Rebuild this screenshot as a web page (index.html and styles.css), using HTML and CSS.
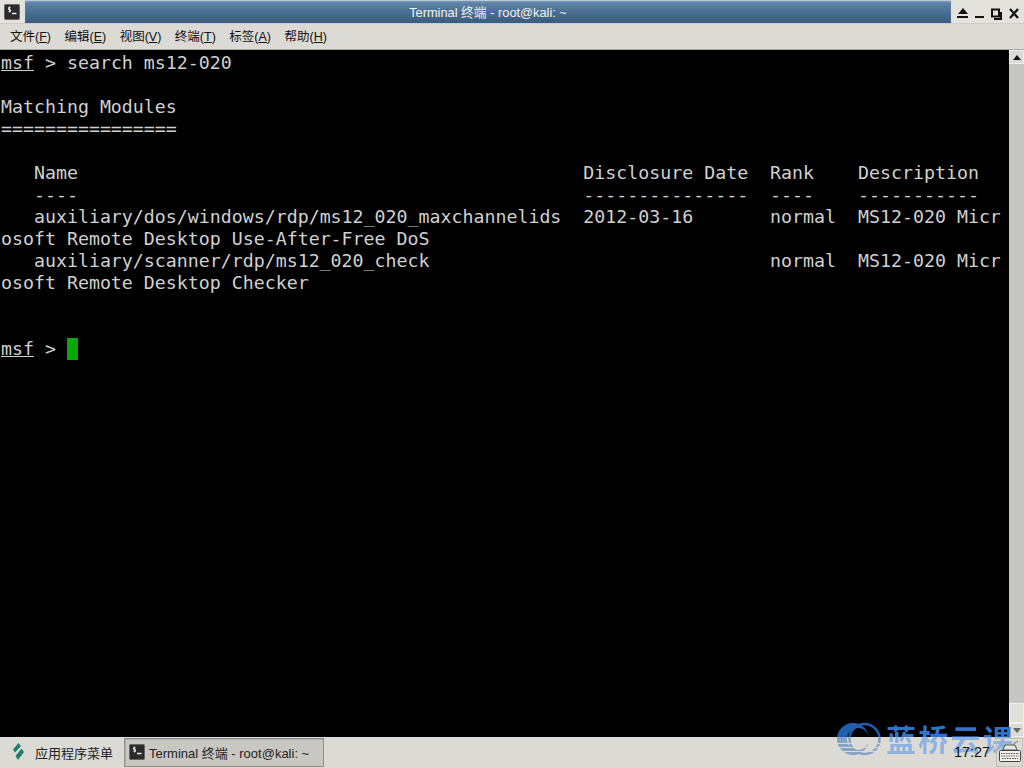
FILE: index.html
```html
<!DOCTYPE html>
<html lang="zh">
<head>
<meta charset="utf-8">
<title>Terminal 终端 - root@kali: ~</title>
<link rel="stylesheet" href="styles.css">
</head>
<body>
<div class="window">
  <header class="titlebar">
    <div class="win-icon">
      <svg width="16" height="16" viewBox="0 0 16 16"><rect x=".5" y=".5" width="15" height="15" rx="1" fill="#2b2b2b" stroke="#666"/><path d="M6.500 3.500H4.500v2h2v2h-2M5.500 2.500v6" stroke="#ddd" stroke-width="1" fill="none"/><path d="M8 9.500h4.500" stroke="#eee" stroke-width="1.500" fill="none"/></svg>
    </div>
    <div class="title-fill"><span class="title-text">Terminal 终端 - root@kali: ~</span></div>
    <div class="win-buttons">
      <svg width="72" height="22" viewBox="0 0 72 22">
        <path d="M7 13l5-6 5 6z M6 15h11v2H6z" fill="#111"/>
        <path d="M24 15h9v2h-9z" fill="#111"/>
        <path d="M41 8.500h7v7h-7z" fill="none" stroke="#111" stroke-width="2"/>
        <path d="M50 11v7h-7" fill="none" stroke="#111" stroke-width="2"/>
        <path d="M59 8l8 9M67 8l-8 9" fill="none" stroke="#111" stroke-width="2.200"/>
      </svg>
    </div>
  </header>
  <nav class="menubar">
    <span class="menu-item">文件(<u>F</u>)</span>
    <span class="menu-item">编辑(<u>E</u>)</span>
    <span class="menu-item">视图(<u>V</u>)</span>
    <span class="menu-item">终端(<u>T</u>)</span>
    <span class="menu-item">标签(<u>A</u>)</span>
    <span class="menu-item">帮助(<u>H</u>)</span>
  </nav>
  <main class="terminal-area">
    <pre class="terminal"><u>msf</u> &gt; search ms12-020

Matching Modules
================

   Name                                              Disclosure Date  Rank    Description
   ----                                              ---------------  ----    -----------
   auxiliary/dos/windows/rdp/ms12_020_maxchannelids  2012-03-16       normal  MS12-020 Micr
osoft Remote Desktop Use-After-Free DoS
   auxiliary/scanner/rdp/ms12_020_check                               normal  MS12-020 Micr
osoft Remote Desktop Checker


<u>msf</u> &gt; <span class="cursor"></span></pre>
    <aside class="scrollbar">
      <div class="sb-btn"><span class="arrow-up"></span></div>
      <div class="sb-track"></div>
      <div class="sb-thumb"></div>
      <div class="sb-btn-down"><span class="arrow-down"></span></div>
    </aside>
  </main>
  <footer class="taskbar">
    <div class="app-menu">
      <svg width="16" height="20" viewBox="0 0 16 20"><path d="M8.500 1l2.500 3-6 6.500L3 7.500z M11.500 6.500L14 10l-6 8-2.500-4z" fill="#1f7d72"/></svg>
      <span>应用程序菜单</span>
    </div>
    <div class="task">
      <svg width="16" height="16" viewBox="0 0 16 16"><rect x=".5" y=".5" width="15" height="15" rx="1" fill="#2b2b2b" stroke="#666"/><path d="M6.500 3.500H4.500v2h2v2h-2M5.500 2.500v6" stroke="#ddd" stroke-width="1" fill="none"/><path d="M8 9.500h4.500" stroke="#eee" stroke-width="1.500" fill="none"/></svg>
      <span>Terminal 终端 - root@kali: ~</span>
    </div>
    <div class="tray">
      <span class="clock">17:27</span>
      <div class="tray-icon">
        <svg width="24" height="26" viewBox="0 0 24 26"><path d="M5 10l2-5h10l2 5z" fill="#e6e5e0" stroke="#555"/><rect x="1.500" y="10.500" width="21" height="11" rx="1" fill="#f2f1ed" stroke="#444"/><path d="M3 13.500h18M3 16h18M4 18.500h16" stroke="#555" stroke-dasharray="1.500 1"/><path d="M15 5c1-3 3-2 5-4" stroke="#666" fill="none"/></svg>
      </div>
    </div>
  </footer>
</div>
<div class="watermark">
  <svg width="44" height="34" viewBox="0 0 44 34">
    <path fill-rule="evenodd" d="M16 1a16 16 0 1 0 0 32a16 16 0 1 0 0-32z M21 6a11 11 0 1 1 0 22a11 11 0 1 1 0-22z" fill="#1f5fae"/>
    <circle cx="27.500" cy="17" r="15" fill="none" stroke="#1f5fae" stroke-width="2.500"/>
    <rect x="0" y="15" width="44" height="19" fill="#dcdad5" opacity=".55"/>
    <path d="M0 21.500h44M0 25.500h44M0 29.500h44" stroke="#dcdad5" stroke-width="1.200"/>
  </svg>
  <span class="wm-text">蓝桥云课</span>
</div>
</body>
</html>
```
FILE: styles.css
```css
* { box-sizing: border-box; }
html, body { margin: 0; height: 100%; overflow: hidden; background: #000; }
body { font-family: "Liberation Sans", "Noto Sans CJK SC", sans-serif; position: relative; }
.window { width: 1024px; height: 768px; display: flex; flex-direction: column; }

.titlebar { height: 23px; display: flex; background: #dcdad5; flex: none; }
.win-icon { width: 25px; display: flex; align-items: center; justify-content: center; padding-right: 2px; background: #e4e2dd; }
.title-fill {
  flex: 1; display: flex; align-items: center; justify-content: center;
  background: linear-gradient(#7d9ab5 0, #5d83a6 10%, #4a6f92 50%, #3a5c7e 100%);
  border-top: 1px solid #b9c8d6;
  padding-bottom: 2px;
}
.title-text { color: #f2f2f2; font-size: 12.800px; }
.win-buttons { width: 73px; display: flex; align-items: center; background: #e4e2dd; }

.menubar {
  height: 27px; flex: none; background: #dcdad5; display: flex; align-items: center;
  padding: 0 0 2px 10px; gap: 13.500px; font-size: 12.500px; color: #111;
  border-bottom: 1px solid #a9a7a2;
  border-top: 1px solid #cfcdc8;
}

.terminal-area { flex: 1; display: flex; background: #000; min-height: 0; }
.terminal {
  flex: 1; margin: 0; padding: 2px 0 0 1px; overflow: hidden;
  font-family: "DejaVu Sans Mono", monospace; font-size: 18.250px; line-height: 22px;
  color: #d0d0d0;
}
.cursor { display: inline-block; width: 11px; height: 22px; background: #0aa70a; vertical-align: top; }

.scrollbar { width: 15px; flex: none; display: flex; flex-direction: column; background: #c8c6c2; }
.sb-btn, .sb-btn-down { height: 14px; flex: none; display: flex; align-items: center; justify-content: center; background: #dcdad5; border: 1px solid #efeeea; }
.sb-track { flex: 1; }
.sb-thumb { height: 20px; flex: none; background: #e2e0db; border: 1px solid #f1f0ec; }
.arrow-up { border: 4px solid transparent; border-top: 0; border-bottom: 5px solid #111; }
.arrow-down { border: 4px solid transparent; border-bottom: 0; border-top: 5px solid #666; }

.taskbar {
  height: 31px; flex: none; background: #dcdad5; display: flex; align-items: center;
  font-size: 13px; color: #222;
}
.app-menu { width: 124px; display: flex; align-items: center; gap: 9px; padding-left: 10px; padding-bottom: 1px; }
.task {
  width: 200px; height: 29px; display: flex; align-items: center; gap: 4px; padding: 0 0 1px 4px;
  background: #c9c7c2; border: 1px solid #8f8d89; box-shadow: inset 1px 1px 0 #b5b3ae;
}
.tray { margin-left: auto; display: flex; align-items: center; gap: 6px; padding-right: 1px; position: relative; z-index: 2; }
.clock { font-size: 14.400px; color: #111; padding-bottom: 1px; }
.tray-icon { width: 27px; height: 29px; display: flex; align-items: center; justify-content: center; border: 1px solid #c2c0bb; }

.watermark {
  position: absolute; left: 837px; top: 722px; display: flex; align-items: flex-start; gap: 5px;
  pointer-events: none; z-index: 1;
}
.wm-text {
  font-size: 30px; font-weight: 700; letter-spacing: 2.300px; line-height: 32px;
  font-family: "Noto Sans CJK SC", sans-serif;
  color: transparent;
  background: linear-gradient(#2f72c8 0, #2f72c8 15px, #8db2e2 15px, #8db2e2 100%);
  -webkit-background-clip: text; background-clip: text;
}
```
